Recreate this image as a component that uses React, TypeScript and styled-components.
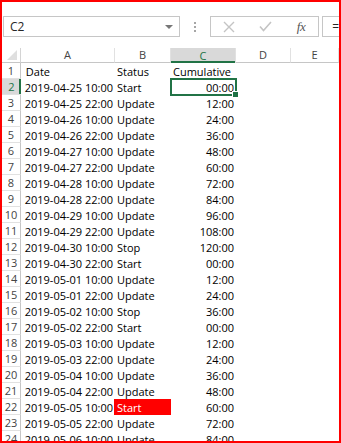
import React from 'react'
import styled, { createGlobalStyle, css } from 'styled-components'

const GREEN = '#217346'

const GlobalStyle = createGlobalStyle`
  html, body {
    margin: 0;
    padding: 0;
    background: #fff;
  }
  body {
    font-family: 'Open Sans', 'Liberation Sans', sans-serif;
  }
`

interface Row {
  date: string
  status: string
  total: string
  flagged?: boolean
}

const rows: Row[] = [
  { date: '2019-04-25 10:00', status: 'Start', total: '00:00' },
  { date: '2019-04-25 22:00', status: 'Update', total: '12:00' },
  { date: '2019-04-26 10:00', status: 'Update', total: '24:00' },
  { date: '2019-04-26 22:00', status: 'Update', total: '36:00' },
  { date: '2019-04-27 10:00', status: 'Update', total: '48:00' },
  { date: '2019-04-27 22:00', status: 'Update', total: '60:00' },
  { date: '2019-04-28 10:00', status: 'Update', total: '72:00' },
  { date: '2019-04-28 22:00', status: 'Update', total: '84:00' },
  { date: '2019-04-29 10:00', status: 'Update', total: '96:00' },
  { date: '2019-04-29 22:00', status: 'Update', total: '108:00' },
  { date: '2019-04-30 10:00', status: 'Stop', total: '120:00' },
  { date: '2019-04-30 22:00', status: 'Start', total: '00:00' },
  { date: '2019-05-01 10:00', status: 'Update', total: '12:00' },
  { date: '2019-05-01 22:00', status: 'Update', total: '24:00' },
  { date: '2019-05-02 10:00', status: 'Stop', total: '36:00' },
  { date: '2019-05-02 22:00', status: 'Start', total: '00:00' },
  { date: '2019-05-03 10:00', status: 'Update', total: '12:00' },
  { date: '2019-05-03 22:00', status: 'Update', total: '24:00' },
  { date: '2019-05-04 10:00', status: 'Update', total: '36:00' },
  { date: '2019-05-04 22:00', status: 'Update', total: '48:00' },
  { date: '2019-05-05 10:00', status: 'Start', total: '60:00', flagged: true },
  { date: '2019-05-05 22:00', status: 'Update', total: '72:00' },
  { date: '2019-05-06 10:00', status: 'Update', total: '84:00' },
]

const Frame = styled.div`
  width: 341px;
  height: 443px;
  box-sizing: border-box;
  border: 2px solid #ff0000;
  border-top-width: 2px;
  overflow: hidden;
  display: flex;
  flex-direction: column;
  background: #fff;
`

const TopStrip = styled.div`
  height: 14px;
  overflow: hidden;
  flex: none;
`

const FormulaBar = styled.div`
  display: flex;
  align-items: stretch;
  height: 21px;
  padding-left: 1px;
  flex: none;
`

const NameBox = styled.div`
  width: 178px;
  box-sizing: border-box;
  border: 1px solid #c6c6c6;
  display: flex;
  align-items: center;
  justify-content: space-between;
  padding: 0 6px 0 6px;
  font-size: 12px;
  color: #262626;
`

const DropArrow = styled.span`
  width: 0;
  height: 0;
  border-left: 4px solid transparent;
  border-right: 4px solid transparent;
  border-top: 4px solid #777;
  margin-top: 1px;
`

const Grip = styled.div`
  width: 30px;
  display: flex;
  flex-direction: column;
  align-items: center;
  justify-content: center;
  gap: 2px;
  span {
    width: 2px;
    height: 2px;
    background: #a6a6a6;
  }
`

const ButtonBox = styled.div`
  width: 110px;
  box-sizing: border-box;
  border: 1px solid #c6c6c6;
  display: grid;
  grid-template-columns: 37px 36px 1fr;
  align-items: center;
  justify-items: center;
`

const FxLabel = styled.span`
  font-family: 'Liberation Serif', serif;
  font-style: italic;
  font-size: 13px;
  color: #555;
  letter-spacing: -0.5px;
`

const FormulaInput = styled.div`
  flex: 1;
  margin-left: 3px;
  box-sizing: border-box;
  border: 1px solid #c6c6c6;
  border-right: none;
  display: flex;
  align-items: center;
  padding-left: 9px;
  font-size: 12px;
  color: #262626;
`

const Sheet = styled.div`
  margin-top: 11px;
  display: grid;
  grid-template-columns: 19px 94px 56px 65px 55px 1fr;
  grid-auto-rows: 16px;
  grid-template-rows: 15px;
  font-size: 11px;
  color: #000;
`

const Corner = styled.div`
  border-right: 1px solid #d4d4d4;
  border-bottom: 1px solid #c6c6c6;
  box-sizing: border-box;
  position: relative;
  &::after {
    content: '';
    position: absolute;
    right: 3px;
    bottom: 2px;
    width: 0;
    height: 0;
    border-left: 10px solid transparent;
    border-bottom: 10px solid #dfdfdf;
  }
`

const ColHead = styled.div<{ $active?: boolean }>`
  box-sizing: border-box;
  border-right: 1px solid #e1e1e1;
  border-bottom: 1px solid #c6c6c6;
  display: flex;
  align-items: center;
  justify-content: center;
  color: #444;
  line-height: 14px;
  ${({ $active }) =>
    $active &&
    css`
      background: #d9d9d9;
      color: ${GREEN};
      border-bottom: none;
      box-shadow: inset 0 -2px 0 ${GREEN};
    `}
`

const RowHead = styled.div<{ $active?: boolean }>`
  box-sizing: border-box;
  border-right: 1px solid #c6c6c6;
  border-bottom: 1px solid #e1e1e1;
  display: flex;
  align-items: center;
  justify-content: center;
  color: #444;
  ${({ $active }) =>
    $active &&
    css`
      background: #d9d9d9;
      color: ${GREEN};
      border-right: none;
      box-shadow: inset -2px 0 0 ${GREEN};
    `}
`

const Cell = styled.div<{ $align?: 'left' | 'right'; $fill?: string }>`
  display: flex;
  align-items: center;
  justify-content: ${({ $align }) => ($align === 'right' ? 'flex-end' : 'flex-start')};
  padding: 0 2px;
  white-space: nowrap;
  position: relative;
  ${({ $fill }) =>
    $fill &&
    css`
      background: ${$fill};
      color: #fff;
      margin-left: -1px;
      padding-left: 3px;
    `}
`

const Selection = styled.div`
  position: absolute;
  left: -1px;
  top: -1px;
  right: -1px;
  bottom: -1px;
  border: 2px solid ${GREEN};
  pointer-events: none;
  &::after {
    content: '';
    position: absolute;
    right: -4px;
    bottom: -4px;
    width: 5px;
    height: 5px;
    background: ${GREEN};
    border: 1px solid #fff;
  }
`

const Blank = styled.div``

const CancelIcon = () => (
  <svg width="12" height="12" viewBox="0 0 12 12">
    <path d="M1 1 L11 11 M11 1 L1 11" stroke="#c4c4c4" strokeWidth="1.4" fill="none" />
  </svg>
)

const CheckIcon = () => (
  <svg width="13" height="11" viewBox="0 0 13 11">
    <path d="M1 5.5 L4.5 9.5 L12 1" stroke="#c4c4c4" strokeWidth="1.6" fill="none" />
  </svg>
)

const columns = ['A', 'B', 'C', 'D', 'E']

export default function App() {
  return (
    <>
      <GlobalStyle />
      <Frame>
        <TopStrip />
        <FormulaBar>
          <NameBox>
            <span>C2</span>
            <DropArrow />
          </NameBox>
          <Grip>
            <span />
            <span />
            <span />
          </Grip>
          <ButtonBox>
            <CancelIcon />
            <CheckIcon />
            <FxLabel>fx</FxLabel>
          </ButtonBox>
          <FormulaInput>=</FormulaInput>
        </FormulaBar>
        <Sheet>
          <Corner />
          {columns.map((c) => (
            <ColHead key={c} $active={c === 'C'}>
              {c}
            </ColHead>
          ))}

          <RowHead>1</RowHead>
          <Cell>&nbsp;Date</Cell>
          <Cell>Status</Cell>
          <Cell>Cumulative</Cell>
          <Blank />
          <Blank />

          {rows.map((r, i) => (
            <React.Fragment key={i}>
              <RowHead $active={i === 0}>{i + 2}</RowHead>
              <Cell $align="right">{r.date}</Cell>
              <Cell $fill={r.flagged ? '#ff0000' : undefined}>{r.status}</Cell>
              <Cell $align="right">
                {r.total}
                {i === 0 && <Selection />}
              </Cell>
              <Blank />
              <Blank />
            </React.Fragment>
          ))}
        </Sheet>
      </Frame>
    </>
  )
}
